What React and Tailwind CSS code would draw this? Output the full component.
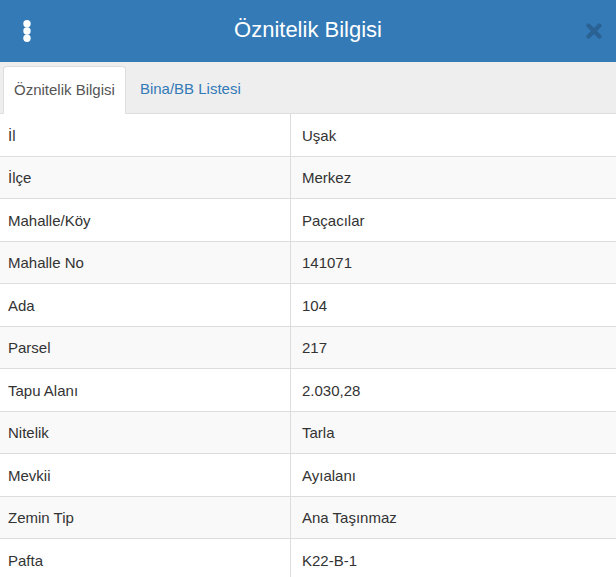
import React from "react";

const rows = [
  ["İl", "Uşak"],
  ["İlçe", "Merkez"],
  ["Mahalle/Köy", "Paçacılar"],
  ["Mahalle No", "141071"],
  ["Ada", "104"],
  ["Parsel", "217"],
  ["Tapu Alanı", "2.030,28"],
  ["Nitelik", "Tarla"],
  ["Mevkii", "Ayıalanı"],
  ["Zemin Tip", "Ana Taşınmaz"],
  ["Pafta", "K22-B-1"],
];

export default function App() {
  return (
    <div
      className="w-[616px] h-[577px] overflow-hidden bg-white text-[#333]"
      style={{ fontFamily: '"Liberation Sans", Arial, sans-serif' }}
    >
      <div className="h-[62px] bg-[#337ab7] grid grid-cols-[1fr_auto_1fr] items-center">
        <div className="pl-[20px] flex items-center">
          <svg width="14" height="24" viewBox="0 0 14 24">
            <circle cx="7" cy="4.7" r="3.7" fill="#fff" />
            <circle cx="7" cy="12" r="3.7" fill="#fff" />
            <circle cx="7" cy="19.3" r="3.7" fill="#fff" />
          </svg>
        </div>
        <div className="text-white text-[22px] leading-none -mt-[2px]">Öznitelik Bilgisi</div>
        <div className="flex justify-end pr-[13px]">
          <svg width="18" height="18" viewBox="0 0 18 18" className="mt-[-1px]">
            <path
              d="M3.5 3.5 L14.5 14.5 M14.5 3.5 L3.5 14.5"
              stroke="#2b6294"
              strokeWidth="4.4"
              strokeLinecap="round"
            />
          </svg>
        </div>
      </div>
      <div className="h-[52px] bg-[#eeeeee] border-b border-[#dddddd] flex items-end pl-[3px]">
        <div className="h-[48px] -mb-px bg-white border border-[#dddddd] border-b-white rounded-t-[4px] px-[10px] flex items-center text-[15px] text-[#555]">
          Öznitelik Bilgisi
        </div>
        <div className="h-[48px] pl-[14px] pr-[10px] flex items-center text-[15px] text-[#337ab7]">
          Bina/BB Listesi
        </div>
      </div>
      <div className="flex flex-col text-[15px]">
        {rows.map(([k, v], i) => (
          <div
            key={k}
            className={
              "grid grid-cols-[290px_1fr] border-b border-[#dddddd] h-[42.5px] " +
              (i % 2 === 1 ? "bg-[#f9f9f9]" : "bg-white")
            }
          >
            <div className="pl-[8px] pt-[2px] flex items-center">{k}</div>
            <div className="pl-[11px] pt-[2px] flex items-center border-l border-[#dddddd]">{v}</div>
          </div>
        ))}
      </div>
    </div>
  );
}
